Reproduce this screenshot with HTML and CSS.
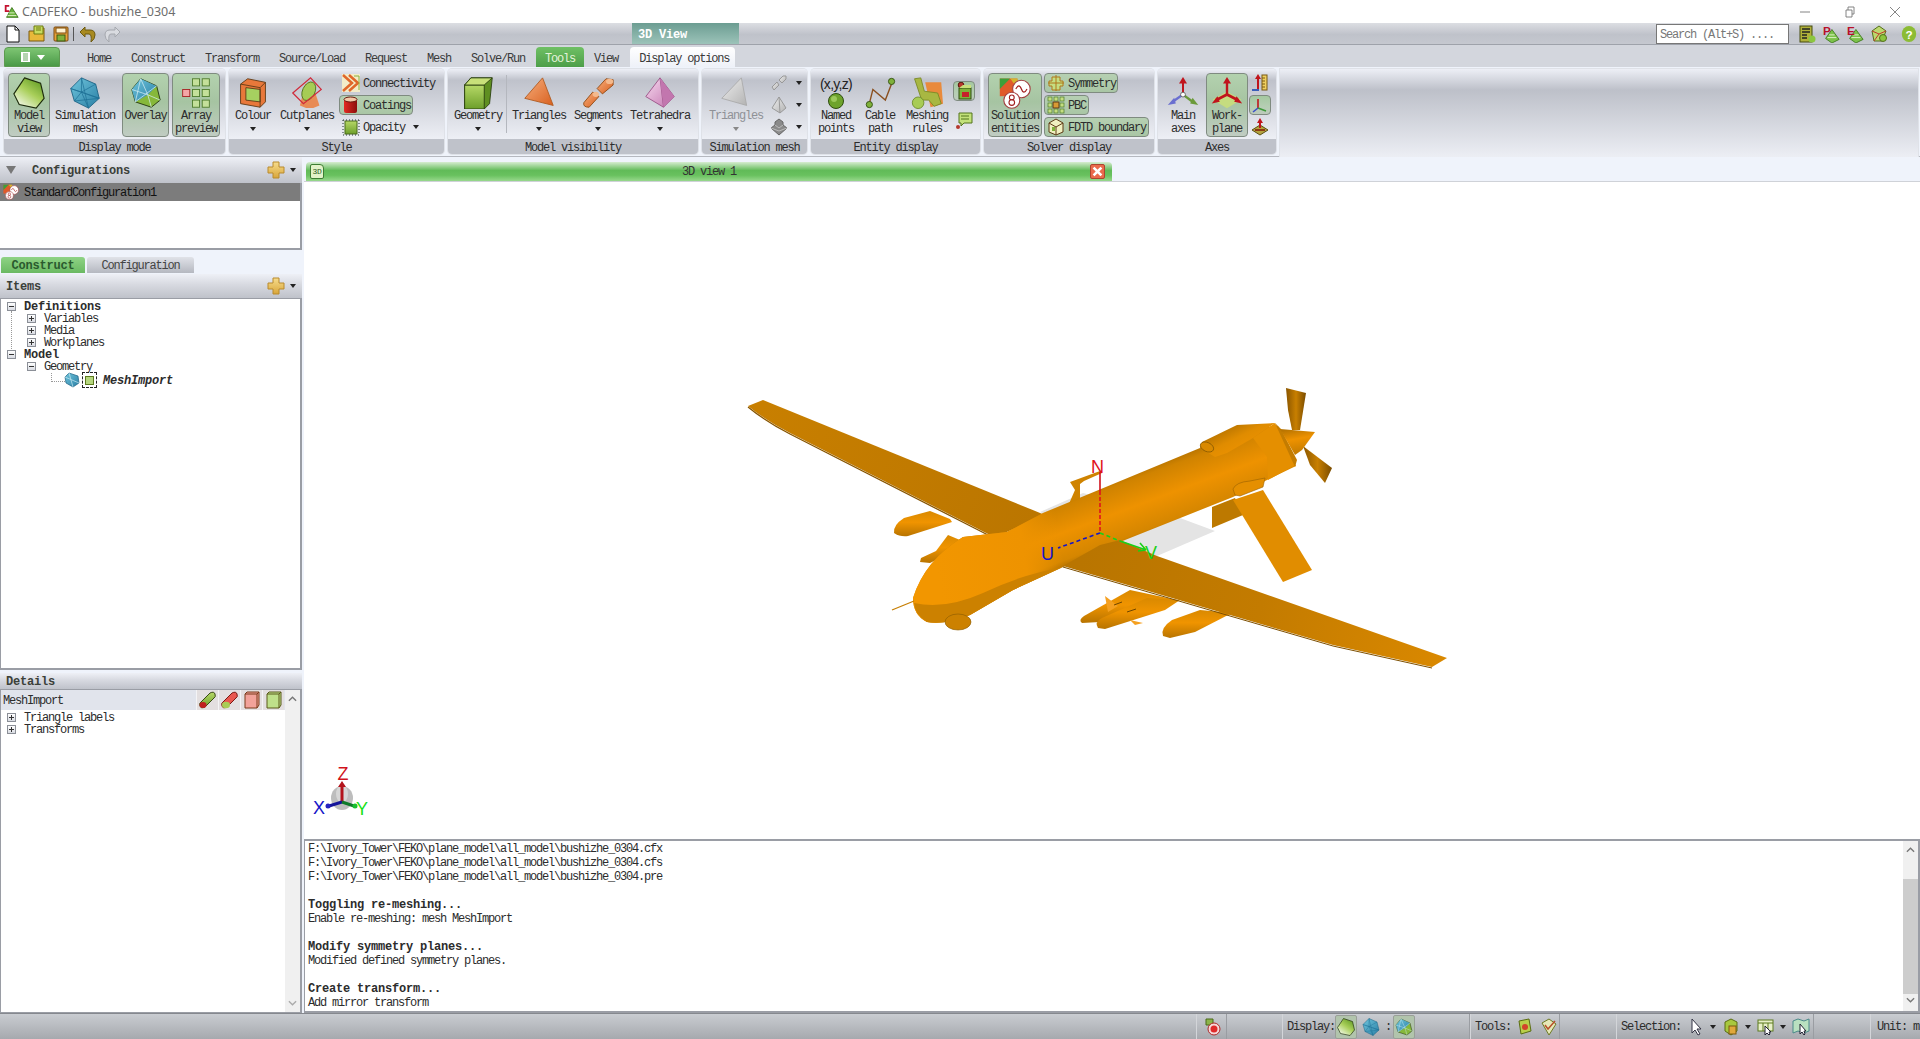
FILE: index.html
```html
<!DOCTYPE html>
<html lang="en">
<head>
<meta charset="utf-8">
<title>CADFEKO - bushizhe_0304</title>
<link rel="stylesheet" href="styles.css">
</head>
<body>
<svg class="defs" aria-hidden="true">
<defs>
<linearGradient id="gr" x1=".8" y1="0" x2=".1" y2="1"><stop offset="0" stop-color="#5f9a22"/><stop offset=".45" stop-color="#a9cf5a"/><stop offset="1" stop-color="#fff"/></linearGradient>
<linearGradient id="gr2" x1="0" y1="0" x2="0" y2="1"><stop offset="0" stop-color="#b6d867"/><stop offset="1" stop-color="#6d9f2a"/></linearGradient>
<linearGradient id="bl" x1="0" y1="0" x2="1" y2="1"><stop offset="0" stop-color="#6fc5dc"/><stop offset="1" stop-color="#2a7fa5"/></linearGradient>
<linearGradient id="or" x1="0" y1="0" x2="1" y2="1"><stop offset="0" stop-color="#f7ae7c"/><stop offset="1" stop-color="#d8601f"/></linearGradient>
<linearGradient id="pk" x1="0" y1="0" x2="1" y2="1"><stop offset="0" stop-color="#f7dcf0"/><stop offset="1" stop-color="#c271ad"/></linearGradient>
<linearGradient id="gy" x1="0" y1="0" x2="1" y2="1"><stop offset="0" stop-color="#eee"/><stop offset="1" stop-color="#b3b3b3"/></linearGradient>
<linearGradient id="rd" x1="0" y1="0" x2="1" y2="0"><stop offset="0" stop-color="#e32b22"/><stop offset="1" stop-color="#8b0f0c"/></linearGradient>
<linearGradient id="gd" x1="0" y1="0" x2="0" y2="1"><stop offset="0" stop-color="#f6dc8c"/><stop offset="1" stop-color="#d9a63a"/></linearGradient>
<linearGradient id="fus" gradientUnits="userSpaceOnUse" x1="1125" y1="470" x2="1151" y2="540"><stop offset="0" stop-color="#a86a00"/><stop offset=".16" stop-color="#d08300"/><stop offset=".5" stop-color="#ee9200"/><stop offset=".85" stop-color="#d58600"/><stop offset="1" stop-color="#a06500"/></linearGradient>
<linearGradient id="nose" gradientUnits="userSpaceOnUse" x1="935" y1="560" x2="1060" y2="540"><stop offset="0" stop-color="#f29600"/><stop offset=".7" stop-color="#ee9300"/><stop offset="1" stop-color="#ee9300" stop-opacity="0"/></linearGradient>
<linearGradient id="hump" gradientUnits="userSpaceOnUse" x1="1225" y1="425" x2="1240" y2="455"><stop offset="0" stop-color="#b37100"/><stop offset=".5" stop-color="#e08c00"/><stop offset="1" stop-color="#ee9200"/></linearGradient>
<linearGradient id="spin" gradientUnits="userSpaceOnUse" x1="1295" y1="428" x2="1300" y2="455"><stop offset="0" stop-color="#b87400"/><stop offset=".4" stop-color="#ee9200"/><stop offset="1" stop-color="#bf7900"/></linearGradient>
<linearGradient id="wing1" gradientUnits="userSpaceOnUse" x1="760" y1="410" x2="1030" y2="530"><stop offset="0" stop-color="#c87f00"/><stop offset="1" stop-color="#bb7600"/></linearGradient>
<linearGradient id="wing2" gradientUnits="userSpaceOnUse" x1="1080" y1="560" x2="1440" y2="660"><stop offset="0" stop-color="#b97500"/><stop offset=".5" stop-color="#c37b00"/><stop offset="1" stop-color="#d98800"/></linearGradient>
<linearGradient id="blade" x1="0" y1="0" x2="1" y2="0"><stop offset="0" stop-color="#8a5600"/><stop offset=".5" stop-color="#c87f00"/><stop offset="1" stop-color="#7a4c00"/></linearGradient>
<linearGradient id="pod" x1="0" y1="0" x2="0" y2="1"><stop offset="0" stop-color="#d98900"/><stop offset=".45" stop-color="#f09400"/><stop offset="1" stop-color="#b87400"/></linearGradient>
</defs>
<symbol id="i-model" viewBox="0 0 36 36"><path d="M13 1 31 7 35 24 26 35 7 31 1 19Z" fill="url(#gr)" stroke="#1d2c0c" stroke-width="1.300"/></symbol>
<symbol id="i-mesh" viewBox="0 0 36 36"><path d="M14 1 30 8 34 24 22 35 6 27 2 13Z" fill="url(#bl)" stroke="#1c6284"/><path d="M14 1 14 17 34 24M2 13 14 17 22 35M14 17 6 27M30 8 14 17M14 1 22 35M2 13 34 24M6 27 34 24" fill="none" stroke="#1d6f95" stroke-width=".8"/></symbol>
<symbol id="i-overlay" viewBox="0 0 36 36"><path d="M12 2 30 10 34 26 24 34 6 28 2 14Z" fill="#86b83a" stroke="#22330f"/><path d="M12 2 30 10 20 20 6 28 2 14Z" fill="url(#bl)"/><path d="M12 2 20 20 24 34M2 14 20 20 34 26M12 2 6 28M30 10 6 28" fill="none" stroke="#d7f0f5" stroke-width=".8"/></symbol>
<symbol id="i-array" viewBox="0 0 36 36"><g fill="#c4e09a" stroke="#4d7a2b"><rect x="14" y="2" width="8" height="8"/><rect x="25" y="2" width="8" height="8"/><rect x="14" y="14" width="8" height="8"/><rect x="25" y="14" width="8" height="8"/><rect x="14" y="26" width="8" height="8"/><rect x="25" y="26" width="8" height="8"/></g><rect x="3" y="14" width="8" height="8" fill="#f4a6a6" stroke="#a32020"/></symbol>
<symbol id="i-colour" viewBox="0 0 36 36"><path d="M4 8 12 2 32 6 32 28 26 34 4 30Z" fill="#e8783a" stroke="#5c3a15"/><path d="M10 12 26 14 26 28 10 26Z" fill="#a6d060" stroke="#5c3a15"/><path d="M4 8 26 12 32 6M26 12V34" fill="none" stroke="#5c3a15"/></symbol>
<symbol id="i-cut" viewBox="0 0 36 36"><path d="M10 32 16 8 24 8 32 32Q21 38 10 32Z" fill="#e88b55"/><ellipse cx="20" cy="16" rx="7" ry="11" transform="rotate(25 20 16)" fill="#a6cc55" stroke="#557722"/><path d="M2 18 22 1 34 14 14 30Z" fill="none" stroke="#d02a3a" stroke-width="1.400"/></symbol>
<symbol id="i-conn" viewBox="0 0 18 18"><rect width="18" height="18" fill="#f3ecc8"/><path d="M1 1 10 9 1 17M7 1 16 9 7 17" fill="none" stroke="#e0672a" stroke-width="2.500"/><path d="M12 2 17 2 17 16" stroke="#8ab040" fill="none"/></symbol>
<symbol id="i-coat" viewBox="0 0 18 18"><rect x="2" y="3" width="13" height="14" rx="2" fill="url(#rd)"/><ellipse cx="8.500" cy="3.500" rx="6.500" ry="2.500" fill="#f3c9a8" stroke="#6d1a10"/></symbol>
<symbol id="i-opac" viewBox="0 0 18 18"><rect x="3" y="3" width="12" height="13" fill="url(#gr2)" stroke="#4b6d1a"/><path d="M1 2H17M1 17H17M1 2V17M17 2V17" stroke="#233" stroke-dasharray="1 2"/></symbol>
<symbol id="i-geo" viewBox="0 0 36 36"><path d="M3 9 10 1 34 1 31 30 25 36 3 36Z" fill="#5f8f21" stroke="#2b4010"/><rect x="3" y="9" width="22" height="27" fill="url(#gr2)" stroke="#2b4010"/><path d="M3 9 10 1 34 1 25 9Z" fill="#c8e07a" stroke="#2b4010"/></symbol>
<symbol id="i-tri" viewBox="0 0 36 36"><path d="M22 1 34 32 2 24Z" fill="url(#or)" stroke="#b05a20"/></symbol>
<symbol id="i-seg" viewBox="0 0 36 36"><g fill="url(#or)" stroke="#8e4a14"><path d="M17 13 27 2 35 3 35 9 23 19Z"/><path d="M2 29 12 17 19 22 8 34Q1 34 2 29Z"/></g><ellipse cx="31" cy="5" rx="4" ry="3" fill="#f4b98c"/><ellipse cx="15.500" cy="19.500" rx="3.500" ry="3" fill="#f4b98c"/></symbol>
<symbol id="i-tet" viewBox="0 0 36 36"><path d="M18 1 34 22 22 34 2 22Z" fill="url(#pk)" stroke="#9a5186"/><path d="M18 1 22 34" stroke="#9a5186"/><path d="M18 1 34 22 22 34Z" fill="#c276ae"/></symbol>
<symbol id="i-gtri" viewBox="0 0 36 36"><path d="M24 1 30 32 2 24Z" fill="url(#gy)" stroke="#aaa"/></symbol>
<symbol id="i-gseg" viewBox="0 0 18 18"><g fill="url(#gy)" stroke="#999"><path d="M9 6 13 2 16 2 16 5 12 9Z"/><path d="M2 13 7 8 9 11 4 16Z"/></g></symbol>
<symbol id="i-gtet" viewBox="0 0 18 18"><path d="M9 1 16 12 10 17 2 12Z" fill="url(#gy)" stroke="#999"/><path d="M9 1 10 17" stroke="#999"/></symbol>
<symbol id="i-gstack" viewBox="0 0 18 18"><path d="M9 1 13 4V7L17 10 9 17 1 10 5 7V4Z" fill="#8a8a8a" stroke="#666"/><path d="M5 7 9 10 13 7M1 10 9 13 17 10" fill="none" stroke="#bbb"/></symbol>
<symbol id="i-named" viewBox="0 0 36 18"><circle cx="18" cy="9" r="7.500" fill="#6ea32c" stroke="#2f4d10"/><circle cx="16" cy="7" r="3" fill="#9cc95a"/></symbol>
<symbol id="i-cable" viewBox="0 0 36 36"><path d="M6 30 10 14 24 26 32 5" fill="none" stroke="#8a5020" stroke-width="1.600"/><circle cx="31" cy="5" r="3.500" fill="#7fb13a" stroke="#2f4d10"/><circle cx="6" cy="31" r="3.500" fill="#7fb13a" stroke="#2f4d10"/></symbol>
<symbol id="i-rules" viewBox="0 0 36 36"><path d="M16 6 34 6 36 30 22 34Z" fill="#e98a3c"/><path d="M4 2 11 1 15 16 30 18 34 30 26 33 20 26 12 26Z" fill="#a8b742" stroke="#7a8a25"/><circle cx="8" cy="29" r="6.500" fill="#a8cc55" stroke="#6f8d2a"/></symbol>
<symbol id="i-entity" viewBox="0 0 18 18"><rect x="4" y="6" width="12" height="11" fill="#7fb13a" stroke="#2f4d10"/><rect x="7" y="10" width="7" height="5" fill="#c71f2a"/><circle cx="6" cy="3" r="2.800" fill="#b5382e" stroke="#5a160f"/><path d="M4 6 8 3 16 3 16 6" fill="#c8e07a"/></symbol>
<symbol id="i-note" viewBox="0 0 18 18"><path d="M4 1H17V11H9L6 14V11H4Z" fill="#c3e27a" stroke="#53751c"/><path d="M6 4H14M6 7H14" stroke="#53751c"/><circle cx="3" cy="15" r="2" fill="#b5382e"/></symbol>
<symbol id="i-sol" viewBox="0 0 40 40"><rect x="1" y="2" width="22" height="22" fill="#e05a2a"/><path d="M1 2H14L1 15Z" fill="#3d9f3a"/><path d="M14 2H23V14Z" fill="#d4b52c"/><circle cx="28" cy="15" r="11" fill="#fff" stroke="#a34040" stroke-width="1.400"/><path d="M21 15Q25 7 28 15T35 15" fill="none" stroke="#a32020" stroke-width="1.500"/><circle cx="16" cy="29" r="10" fill="#fff" stroke="#a34040" stroke-width="1.400"/><circle cx="16" cy="25.500" r="3" fill="none" stroke="#a32020" stroke-width="1.400"/><circle cx="16" cy="32" r="3.500" fill="none" stroke="#a32020" stroke-width="1.400"/></symbol>
<symbol id="i-sym" viewBox="0 0 18 18"><path d="M5 3H13V7H16V12H13V16H5V12H2V7H5Z" fill="#c4de82" stroke="#b0781a"/><path d="M9 1V17M1 9H17" stroke="#b0781a"/></symbol>
<symbol id="i-pbc" viewBox="0 0 18 18"><g fill="#c4de82" stroke="#4d7a2b" stroke-width=".7"><rect x="1" y="1" width="4" height="4"/><rect x="7" y="1" width="4" height="4"/><rect x="13" y="1" width="4" height="4"/><rect x="1" y="7" width="4" height="4"/><rect x="13" y="7" width="4" height="4"/><rect x="1" y="13" width="4" height="4"/><rect x="7" y="13" width="4" height="4"/><rect x="13" y="13" width="4" height="4"/></g><rect x="6" y="6" width="6" height="6" fill="#d99a34" stroke="#5c3a15"/></symbol>
<symbol id="i-fdtd" viewBox="0 0 18 18"><path d="M2 5 9 1 16 5V14L9 17 2 14Z" fill="#f0f0c0" stroke="#5c3a15"/><path d="M2 5 9 9 16 5M9 9V17" fill="none" stroke="#5c3a15"/><rect x="5" y="9" width="3" height="4" fill="#7fb13a"/></symbol>
<symbol id="i-axes" viewBox="0 0 40 40"><path d="M20 21V6" stroke="#c0141c" stroke-width="2.500"/><path d="M20 0 25 8H15Z" fill="#c0141c"/><path d="M20 22 7 31" stroke="#6a6fd0" stroke-width="3"/><path d="M1 35 9 26 11 33Z" fill="#6a6fd0"/><path d="M20 22 32 31" stroke="#6b9a3a" stroke-width="3"/><path d="M39 35 29 33 32 26Z" fill="#6b9a3a"/><circle cx="20" cy="22" r="3" fill="#fff" stroke="#555"/></symbol>
<symbol id="i-wp" viewBox="0 0 40 40"><path d="M20 39 2 28 20 18 38 28Z" fill="#c5dc7f"/><path d="M20 22V6" stroke="#c0141c" stroke-width="3"/><path d="M20 0 25 8H15Z" fill="#c0141c"/><path d="M20 22 6 29M20 22 34 29" stroke="#c0141c" stroke-width="3.500"/><path d="M1 33 8 24 11 31Z M39 33 32 24 29 31Z" fill="#c0141c"/></symbol>
<symbol id="i-ax1" viewBox="0 0 18 18"><path d="M7 16V4" stroke="#c0141c" stroke-width="2"/><path d="M7 0 10 5H4Z" fill="#c0141c"/><path d="M1 16H8" stroke="#3a5fb8" stroke-width="2"/><rect x="11" y="1" width="5" height="15" fill="#f0d060" stroke="#7a5a10"/><path d="M11 4H14M11 7H14M11 10H14M11 13H14" stroke="#7a5a10"/></symbol>
<symbol id="i-ax2" viewBox="0 0 18 18"><path d="M7 12V3" stroke="#c0141c" stroke-width="1.600"/><path d="M7 12 2 16" stroke="#3a4fc8" stroke-width="1.600"/><path d="M7 12 15 15" stroke="#3f9a3a" stroke-width="1.600"/></symbol>
<symbol id="i-ax3" viewBox="0 0 18 18"><path d="M9 17 1 12 9 7 17 12Z" fill="#b5a33e" stroke="#5a4f14"/><path d="M9 10V3" stroke="#c0141c" stroke-width="2"/><path d="M9 0 12 5H6Z" fill="#c0141c"/><path d="M4 12H14" stroke="#8a3c14" stroke-width="2"/></symbol>
<symbol id="i-plus" viewBox="0 0 18 18"><path d="M6 1H12V6H17V12H12V17H6V12H1V6H6Z" fill="url(#gd)" stroke="#b98a2c"/></symbol>
<symbol id="i-cad" viewBox="0 0 18 18"><path d="M10 4 17 15 4 15Z" fill="#6cb33f" stroke="#3f7a1e"/><path d="M5 13H15M7 10H13" stroke="#e7f5d0"/><path d="M7 1H2V9H7V7H4V3H7Z" fill="#c41230"/></symbol>
<symbol id="i-tree-mesh" viewBox="0 0 16 16"><path d="M5 1 14 4 15 11 9 15 2 11 1 5Z" fill="url(#bl)" stroke="#1c6284" stroke-width=".7"/><path d="M5 1 9 15M1 5 15 11" stroke="#c8eaf2" stroke-width=".7"/></symbol>
<symbol id="i-cyl-g" viewBox="0 0 18 18"><path d="M2 11 11 2Q15 0 16 3 17 6 15 7L6 16Q2 18 1 15 0 12 2 11Z" fill="url(#gr2)" stroke="#3a4a15"/><ellipse cx="4" cy="14" rx="3.500" ry="3" fill="#c01f20"/></symbol>
<symbol id="i-cyl-r" viewBox="0 0 18 18"><path d="M2 11 11 2Q15 0 16 3 17 6 15 7L6 16Q2 18 1 15 0 12 2 11Z" fill="#e9574f" stroke="#7a1812"/><ellipse cx="5" cy="14" rx="4" ry="3.300" fill="#a8cc55"/></symbol>
<symbol id="i-box-r" viewBox="0 0 18 18"><path d="M2 3 4 1H16V14L14 17H2Z" fill="#f2a29a" stroke="#7a3a1a"/><path d="M2 3H14V17M14 3 16 1" fill="none" stroke="#7a3a1a"/></symbol>
<symbol id="i-box-g" viewBox="0 0 18 18"><path d="M2 3 4 1H16V14L14 17H2Z" fill="#bfe08a" stroke="#5a5a1a"/><path d="M2 3H14V17M14 3 16 1" fill="none" stroke="#5a5a1a"/></symbol>
<symbol id="i-cursor" viewBox="0 0 18 18"><path d="M5 1V15L8 12 11 17 13 16 10 11H14Z" fill="#fff" stroke="#334"/></symbol>
<symbol id="i-table" viewBox="0 0 18 18"><rect x="1" y="2" width="15" height="11" fill="#e8f0c8" stroke="#5c7a1e"/><path d="M1 5H16M6 5V13M11 5V13" stroke="#5c7a1e"/><path d="M8 8V17L10 15 12 17 13 16 12 14H14Z" fill="#fff" stroke="#223"/></symbol>
<symbol id="i-doc" viewBox="0 0 18 18"><path d="M3 1H11L15 5V17H3Z" fill="#fff" stroke="#111"/><path d="M11 1V5H15" fill="none" stroke="#111"/></symbol>
<symbol id="i-open" viewBox="0 0 18 18"><path d="M1 6H8V3H16V16H1Z" fill="#e8b83a" stroke="#7a5a10"/><path d="M6 1H15V9H6Z" fill="#c8dc60" stroke="#6d7a10"/><path d="M8 3H13M8 5H13" stroke="#6d7a10"/></symbol>
<symbol id="i-save" viewBox="0 0 18 18"><rect x="2" y="2" width="14" height="14" rx="1" fill="#e9a23a" stroke="#7a4a10"/><rect x="4" y="3" width="10" height="5" fill="#fff2cf" stroke="#7a4a10"/><rect x="5" y="10" width="8" height="6" fill="#7fb13a" stroke="#3f5a10"/></symbol>
<symbol id="i-undo" viewBox="0 0 18 18"><path d="M1 7 6 2V5H11Q16 5 16 10 16 14 12 17 13 9 10 9H6V12Z" fill="#a88a20" stroke="#6d5a10"/></symbol>
<symbol id="i-redo" viewBox="0 0 18 18"><path d="M17 7 12 2V5H7Q2 5 2 10 2 14 6 17 5 9 8 9H12V12Z" fill="#d9dbe0" stroke="#a5a8ae"/></symbol>
<symbol id="i-abacus" viewBox="0 0 18 18"><rect x="2" y="1" width="12" height="16" fill="#b0b03a" stroke="#444a10"/><path d="M4 4H12M4 7H12M4 10H9M4 13H9" stroke="#222" stroke-width="1.300"/><circle cx="14" cy="14" r="3.500" fill="#8cc63f"/></symbol>
<symbol id="i-tree2" viewBox="0 0 20 20"><path d="M11 5 19 16 11 20 4 15Z" fill="#7cc24a" stroke="#3f7a1e"/><path d="M6 14H16M8 11H14" stroke="#e7f5d0"/></symbol>
<symbol id="i-tool" viewBox="0 0 18 18"><path d="M9 1 16 6 12 16 4 16 2 6Z" fill="#bcd86e" stroke="#54701a"/><path d="M2 6 9 9 16 6M9 9 4 16" stroke="#c0392b" fill="none"/><circle cx="13" cy="13" r="3.500" fill="#8cc63f" stroke="#54701a"/></symbol>
<symbol id="i-rec" viewBox="0 0 18 18"><path d="M3 1H10V7H3Z" fill="#8cb44a" stroke="#4a6a18"/><circle cx="11" cy="11" r="6" fill="#f4d8d8" stroke="#b02a2a"/><circle cx="11" cy="11" r="3.500" fill="#e02a2a"/></symbol>
<symbol id="i-t1" viewBox="0 0 18 18"><path d="M3 3 13 1 15 13 5 16Z" fill="#b9cf4a" stroke="#5a6d12"/><circle cx="9" cy="9" r="3" fill="#d2452a"/></symbol>
<symbol id="i-t2" viewBox="0 0 18 18"><path d="M2 5 9 1 16 6 9 17Z" fill="#e6e8b8" stroke="#6d7a22"/><path d="M5 7 8 11 15 3" fill="none" stroke="#b8502a" stroke-width="1.500"/></symbol>
<symbol id="i-selbox" viewBox="0 0 18 18"><path d="M3 4 9 1 15 4V13L9 17 3 13Z" fill="#a8c83e" stroke="#5a6d12"/><rect x="7" y="8" width="7" height="8" fill="#e0a83a" stroke="#7a5a10"/></symbol>
<symbol id="i-selmap" viewBox="0 0 18 18"><path d="M1 3 6 1 12 3 17 1V13L12 15 6 13 1 15Z" fill="#b9e0c0" stroke="#4a8a8a"/><path d="M8 6V16L10 14 12 17 13 16 12 13H14Z" fill="#fff" stroke="#223"/></symbol>
</svg>

<header class="titlebar">
  <svg class="ic16 tb-logo"><use href="#i-cad"/></svg>
  <span class="tb-title">CADFEKO - bushizhe_0304</span>
  <div class="winctl">
    <svg class="wc" viewBox="0 0 12 12"><path d="M1 6H11"/></svg>
    <svg class="wc" viewBox="0 0 12 12"><path d="M2 4H8V11H2ZM4 4V1H10V8H8"/></svg>
    <svg class="wc" viewBox="0 0 12 12"><path d="M1 1 11 11M11 1 1 11"/></svg>
  </div>
</header>

<div class="quick">
  <div class="q-icons">
    <svg class="ic18"><use href="#i-doc"/></svg>
    <svg class="ic18"><use href="#i-open"/></svg>
    <svg class="ic18"><use href="#i-save"/></svg>
    <span class="q-sep"></span>
    <svg class="ic18"><use href="#i-undo"/></svg>
    <svg class="ic18"><use href="#i-redo"/></svg>
  </div>
  <div class="ctx-head">3D View</div>
  <div class="search">Search (Alt+S) ....</div>
  <div class="q-right">
    <svg class="ic18"><use href="#i-abacus"/></svg>
    <svg class="ic18" viewBox="0 0 20 20"><use href="#i-tree2"/><text x="1" y="11" class="ico-t">P</text></svg>
    <svg class="ic18" viewBox="0 0 20 20"><use href="#i-tree2"/><text x="1" y="11" class="ico-t">E</text></svg>
    <svg class="ic18"><use href="#i-tool"/></svg>
    <svg class="ic18 help" viewBox="0 0 20 20"><ellipse cx="10" cy="10" rx="8" ry="9" fill="#8cbc35"/><text x="10" y="15" class="ico-q">?</text></svg>
  </div>
</div>

<nav class="tabs">
  <div class="appbtn"><svg class="app-doc" viewBox="0 0 12 12"><rect x="2" y="1" width="9" height="10" fill="#fff"/><path d="M4 3H9M4 5H9M4 7H9M4 9H9" stroke="#6aa860"/></svg><i class="arr arr-w"></i></div>
  <span class="tab t-home">Home</span>
  <span class="tab">Construct</span>
  <span class="tab">Transform</span>
  <span class="tab">Source/Load</span>
  <span class="tab">Request</span>
  <span class="tab">Mesh</span>
  <span class="tab">Solve/Run</span>
  <span class="tab tab-tools">Tools</span>
  <span class="tab t-view">View</span>
  <span class="tab tab-active">Display options</span>
</nav>

<section class="ribbon">
  <div class="group g1">
    <div class="g-body p4">
      <div class="rb w42 on"><svg class="ic36"><use href="#i-model"/></svg><span>Model</span><span>view</span></div>
      <div class="rb w66 ml2"><svg class="ic36"><use href="#i-mesh"/></svg><span>Simulation</span><span>mesh</span></div>
      <div class="rb w47 ml4 on"><svg class="ic36"><use href="#i-overlay"/></svg><span>Overlay</span></div>
      <div class="rb w48 ml3 on"><svg class="ic36"><use href="#i-array"/></svg><span>Array</span><span>preview</span></div>
    </div>
    <div class="g-label">Display mode</div>
  </div>

  <div class="group g2">
    <div class="g-body p1">
      <div class="rb w46"><svg class="ic36"><use href="#i-colour"/></svg><span>Colour</span><i class="arr"></i></div>
      <div class="rb w58 ml2"><svg class="ic36"><use href="#i-cut"/></svg><span>Cutplanes</span><i class="arr"></i></div>
      <div class="col ml3">
        <div class="si"><svg class="ic18"><use href="#i-conn"/></svg><span>Connectivity</span></div>
        <div class="si on"><svg class="ic18"><use href="#i-coat"/></svg><span>Coatings</span></div>
        <div class="si"><svg class="ic18"><use href="#i-opac"/></svg><span>Opacity</span><i class="arr arr-s"></i></div>
      </div>
    </div>
    <div class="g-label">Style</div>
  </div>

  <div class="group g3">
    <div class="g-body p3">
      <div class="rb w54"><svg class="ic36"><use href="#i-geo"/></svg><span>Geometry</span><i class="arr"></i></div>
      <span class="r-sep"></span>
      <div class="rb w60 ml2"><svg class="ic36"><use href="#i-tri"/></svg><span>Triangles</span><i class="arr"></i></div>
      <div class="rb w56 ml1"><svg class="ic36"><use href="#i-seg"/></svg><span>Segments</span><i class="arr"></i></div>
      <div class="rb w66 ml1"><svg class="ic36"><use href="#i-tet"/></svg><span>Tetrahedra</span><i class="arr"></i></div>
    </div>
    <div class="g-label">Model visibility</div>
  </div>

  <div class="group g4">
    <div class="g-body p4 dim">
      <div class="rb w60"><svg class="ic36"><use href="#i-gtri"/></svg><span>Triangles</span><i class="arr arr-g"></i></div>
      <div class="col ml4">
        <div class="si2"><svg class="ic18"><use href="#i-gseg"/></svg><i class="arr"></i></div>
        <div class="si2"><svg class="ic18"><use href="#i-gtet"/></svg><i class="arr"></i></div>
        <div class="si2"><svg class="ic18"><use href="#i-gstack"/></svg><i class="arr"></i></div>
      </div>
    </div>
    <div class="g-label">Simulation mesh</div>
  </div>

  <div class="group g5">
    <div class="g-body p4">
      <div class="rb w42"><div class="xyz"><span class="xyz-t">(x,y,z)</span><svg class="ic-named"><use href="#i-named"/></svg></div><span>Named</span><span>points</span></div>
      <div class="rb w42 ml2"><svg class="ic36"><use href="#i-cable"/></svg><span>Cable</span><span>path</span></div>
      <div class="rb w46 ml3"><svg class="ic36"><use href="#i-rules"/></svg><span>Meshing</span><span>rules</span></div>
      <div class="col2 ml3">
        <div class="sq on"><svg class="ic18"><use href="#i-entity"/></svg></div>
        <div class="sq"><svg class="ic18"><use href="#i-note"/></svg></div>
      </div>
    </div>
    <div class="g-label">Entity display</div>
  </div>

  <div class="group g6">
    <div class="g-body p4">
      <div class="rb w54 on"><svg class="ic36"><use href="#i-sol"/></svg><span>Solution</span><span>entities</span></div>
      <div class="col ml2">
        <div class="si on w74"><svg class="ic18"><use href="#i-sym"/></svg><span>Symmetry</span></div>
        <div class="si on w45"><svg class="ic18"><use href="#i-pbc"/></svg><span>PBC</span></div>
        <div class="si on w105"><svg class="ic18"><use href="#i-fdtd"/></svg><span>FDTD boundary</span></div>
      </div>
    </div>
    <div class="g-label">Solver display</div>
  </div>

  <div class="group g7">
    <div class="g-body p5">
      <div class="rb w40"><svg class="ic36"><use href="#i-axes"/></svg><span>Main</span><span>axes</span></div>
      <div class="rb w42 ml3 on"><svg class="ic36"><use href="#i-wp"/></svg><span>Work-</span><span>plane</span></div>
      <div class="col ml1">
        <div class="sq"><svg class="ic18"><use href="#i-ax1"/></svg></div>
        <div class="sq on"><svg class="ic18"><use href="#i-ax2"/></svg></div>
        <div class="sq"><svg class="ic18"><use href="#i-ax3"/></svg></div>
      </div>
    </div>
    <div class="g-label">Axes</div>
  </div>

  <div class="group g8"></div>
</section>

<main class="workspace">
  <aside class="left">
    <div class="phead phead-cfg">
      <i class="tri-down"></i><b class="ph-t">Configurations</b>
      <svg class="ic18 ph-plus"><use href="#i-plus"/></svg><i class="arr"></i>
    </div>
    <div class="cfg-list">
      <div class="cfg-sel"><svg class="ic16"><use href="#i-sol"/></svg><span>StandardConfiguration1</span></div>
    </div>
    <div class="ltabs">
      <b class="ltab ltab-on">Construct</b>
      <span class="ltab">Configuration</span>
    </div>
    <div class="phead phead-items">
      <b class="ph-t2">Items</b>
      <svg class="ic18 ph-plus"><use href="#i-plus"/></svg><i class="arr"></i>
    </div>
    <div class="tree">
      <i class="vline"></i>
      <div class="tr l0"><i class="ex minus"></i><b>Definitions</b></div>
      <div class="tr l1"><i class="ex plus"></i><span>Variables</span></div>
      <div class="tr l1"><i class="ex plus"></i><span>Media</span></div>
      <div class="tr l1"><i class="ex plus"></i><span>Workplanes</span></div>
      <div class="tr l0"><i class="ex minus"></i><b>Model</b></div>
      <div class="tr l1"><i class="ex minus"></i><span>Geometry</span></div>
      <div class="tr-mesh">
        <i class="stub"></i>
        <svg class="ic16"><use href="#i-tree-mesh"/></svg>
        <span class="dotbox"><i></i></span>
        <b class="mi">MeshImport</b>
      </div>
    </div>
    <div class="phead phead-det"><b class="ph-t2">Details</b></div>
    <div class="details">
      <div class="det-main">
        <div class="det-head">
          <span class="det-name">MeshImport</span>
          <span class="det-btn"><svg class="ic18"><use href="#i-cyl-g"/></svg></span>
          <span class="det-btn"><svg class="ic18"><use href="#i-cyl-r"/></svg></span>
          <span class="det-btn"><svg class="ic18"><use href="#i-box-r"/></svg></span>
          <span class="det-btn"><svg class="ic18"><use href="#i-box-g"/></svg></span>
        </div>
        <div class="tr l0 first"><i class="ex plus"></i><span>Triangle labels</span></div>
        <div class="tr l0"><i class="ex plus"></i><span>Transforms</span></div>
      </div>
      <div class="sb"><svg class="chev" viewBox="0 0 10 6"><path d="M1 5 5 1 9 5"/></svg><span class="sb-fill"></span><svg class="chev" viewBox="0 0 10 6"><path d="M1 1 5 5 9 1"/></svg></div>
    </div>
  </aside>

  <section class="right">
    <div class="vtabbar">
      <div class="vtab">
        <span class="vt-ic">3D</span>
        <span class="vt-text">3D view 1</span>
        <span class="vt-x"><svg viewBox="0 0 10 10"><path d="M2 2 8 8M8 2 2 8"/></svg></span>
      </div>
    </div>
    <div class="viewport">
      <svg class="scene" viewBox="304 182 1616 657" preserveAspectRatio="none">
        <polygon points="1040,512 1083,493 1180,518 1215,531 1157,556 1090,540" fill="#e4e4e4"/>
        <!-- far pods -->
        <path d="M950,519 930,511 904,518Q893,525 894,533 900,537 908,536L952,522Z" fill="url(#pod)"/>
        <path d="M948,535 936,551 921,558 920,562 930,563 950,553 960,540Z" fill="url(#pod)"/>
        <!-- far wing -->
        <path d="M748,406 763,400 1045,515 1000,535 988,534 790,433Q765,420 748,406Z" fill="url(#wing1)"/>
        <path d="M748,407Q765,421 790,434L988,535" fill="none" stroke="#875500" stroke-width="1.300"/>
        <!-- antenna + tail -->
        <path d="M1070,482 1100,471 1102,473 1084,481 1080,484 1080,503 1068,506 1075,490Z" fill="#cf8300"/>
        <polygon points="1212,507 1212,528 1243,515 1235,498" fill="#bd7900"/>
        <polygon points="1233,500 1263,490 1312,570 1283,582" fill="#e18d00"/>
        <!-- propeller -->
        <polygon points="1286,388 1306,393 1300,430 1292,430 1288,410" fill="url(#blade)"/>
        <polygon points="1303,446 1332,468 1325,483 1310,465" fill="url(#blade)"/>
        <!-- body -->
        <path d="M913,598Q925,560 963,537L1007,532 1043,513 1200,448 1237,430 1278,426 1296,466 1267,480 1233,497 1120,542 1063,567 1013,590 970,615Q945,625 927,622 913,615 913,598Z" fill="url(#fus)"/>
        <path d="M913,598Q925,560 963,537L1007,532 1043,513 1062,505 1075,560 1063,567 1013,590 970,615Q945,625 927,622 913,615 913,598Z" fill="url(#nose)"/>
        <path d="M914,603Q945,610 983,593 1020,575 1063,567L1013,590 970,615Q945,625 927,622 915,615 914,603Z" fill="#cc8100"/>
        <path d="M1200,448 1202,442 1237,425 1275,423 1253,438 1227,453 1215,457Z" fill="url(#hump)"/>
        <polygon points="1253,438 1275,423 1295,465 1268,480 1267,457" fill="#e58f00"/>
        <polygon points="1275,423 1281,429 1297,460 1295,467" fill="#c47c00"/>
        <polygon points="1280,429 1315,432 1302,450 1295,455" fill="url(#spin)"/>
        <ellipse cx="1207" cy="447" rx="7" ry="4.500" transform="rotate(25 1207 447)" fill="#d98900" stroke="#8a5a00" stroke-width=".8"/>
        <path d="M1233,489Q1236,482 1250,481L1265,478 1263,487 1240,496 1235,495Z" fill="#e58f00" stroke="#9a6200" stroke-width=".6"/>
        <!-- near stores -->
        <path d="M1130,590 1177,600 1170,606 1100,622 1082,623Q1078,620 1084,616Z" fill="url(#pod)"/>
        <path d="M1147,598 1180,600 1165,610 1105,629 1098,628Q1094,622 1102,618Z" fill="url(#pod)"/>
        <path d="M1105,596 1118,606 1108,612Z M1130,620 1143,623 1135,625Z" fill="#f5a020"/>
        <path d="M1114,605 1122,602M1127,612 1136,609" stroke="#6d4500" stroke-width="1"/>
        <path d="M1200,610 1232,613 1195,632 1170,638 1163,636Q1160,628 1172,620Z" fill="url(#pod)"/>
        <!-- pitot + nose gear -->
        <path d="M892,610 914,601" stroke="#c67d00" stroke-width="1.200"/>
        <ellipse cx="958" cy="622" rx="13" ry="8" fill="#cc8100" stroke="#8a5a00" stroke-width=".6"/>
        <!-- near wing -->
        <polygon points="1063,566 1100,545 1120,540 1157,556 1447,658 1432,667 1333,645 1230,615" fill="url(#wing2)"/>
        <polyline points="1063,567 1230,616 1333,646 1432,668" fill="none" stroke="#7d4f00" stroke-width="1"/>
        <!-- workplane axes -->
        <path d="M1100,472V491" stroke="#d0121c" stroke-width="1.600"/>
        <path d="M1100,491V533" stroke="#e0121c" stroke-width="1.600" stroke-dasharray="4 2"/>
        <path d="M1100,533 1058,548" stroke="#1515c8" stroke-width="1.600" stroke-dasharray="4 3"/>
        <path d="M1100,533 1120,541" stroke="#18d018" stroke-width="1.600" stroke-dasharray="4 3"/>
        <path d="M1120,541 1146,550M1146,550 1140,543M1146,550 1138,551" stroke="#18d018" stroke-width="1.600" fill="none"/>
        <text x="1097.500" y="473" class="ax" fill="#e0121c">N</text>
        <text x="1047.500" y="560" class="ax" fill="#1515c8">U</text>
        <text x="1151" y="559" class="ax" fill="#18d018">V</text>
        <!-- triad -->
        <ellipse cx="342" cy="798" rx="11" ry="12" fill="#bdbdbd"/>
        <ellipse cx="342" cy="794" rx="6" ry="9" fill="#d6d6d6"/>
        <path d="M342 802V785" stroke="#b3141c" stroke-width="3"/>
        <path d="M342 781 346 787H338Z" fill="#b3141c"/>
        <path d="M342 802 329 806" stroke="#14149a" stroke-width="3"/>
        <circle cx="328" cy="806" r="2.500" fill="#2424c0"/>
        <path d="M342 802 354 806" stroke="#0e7a2a" stroke-width="3"/>
        <circle cx="355" cy="806" r="2.500" fill="#18c030"/>
        <text x="343" y="780" class="ax" fill="#d0121c">Z</text>
        <text x="319" y="814" class="ax" fill="#1515c8">X</text>
        <text x="362" y="815" class="ax" fill="#18e018">Y</text>
      </svg>
    </div>
    <div class="console">
      <div class="con-text">
        <div>F:\Ivory_Tower\FEKO\plane_model\all_model\bushizhe_0304.cfx</div>
        <div>F:\Ivory_Tower\FEKO\plane_model\all_model\bushizhe_0304.cfs</div>
        <div>F:\Ivory_Tower\FEKO\plane_model\all_model\bushizhe_0304.pre</div>
        <div class="blank"></div>
        <b>Toggling re-meshing...</b>
        <div>Enable re-meshing: mesh MeshImport</div>
        <div class="blank"></div>
        <b>Modify symmetry planes...</b>
        <div>Modified defined symmetry planes.</div>
        <div class="blank"></div>
        <b>Create transform...</b>
        <div>Add mirror transform</div>
      </div>
      <div class="sb sb-con"><svg class="chev" viewBox="0 0 10 6"><path d="M1 5 5 1 9 5"/></svg><span class="sb-top"></span><span class="sb-thumb"></span><svg class="chev" viewBox="0 0 10 6"><path d="M1 1 5 5 9 1"/></svg></div>
    </div>
  </section>
</main>

<footer class="status">
  <div class="st c-rec"><svg class="ic18"><use href="#i-rec"/></svg></div>
  <div class="st c-disp">
    <span>Display:</span>
    <span class="st-on"><svg class="ic18"><use href="#i-model"/></svg></span>
    <svg class="ic18 d-mesh"><use href="#i-mesh"/></svg>
    <span class="colon">:</span>
    <span class="st-on"><svg class="ic18"><use href="#i-overlay"/></svg></span>
  </div>
  <div class="st c-tools">
    <span>Tools:</span>
    <svg class="ic18"><use href="#i-t1"/></svg>
    <svg class="ic18"><use href="#i-t2"/></svg>
  </div>
  <div class="st c-sel">
    <span>Selection:</span>
    <svg class="ic18"><use href="#i-cursor"/></svg><i class="arr"></i>
    <svg class="ic18"><use href="#i-selbox"/></svg><i class="arr"></i>
    <svg class="ic18"><use href="#i-table"/></svg><i class="arr"></i>
    <svg class="ic18"><use href="#i-selmap"/></svg>
  </div>
  <div class="st c-unit"><span>Unit: m</span></div>
</footer>
</body>
</html>
```
FILE: styles.css
```css
* { box-sizing: border-box; }
html, body { margin: 0; padding: 0; }
body {
  width: 1920px; height: 1039px; overflow: hidden;
  display: flex; flex-direction: column;
  font: 12px/13px "Liberation Mono", monospace;
  letter-spacing: -1.2px;
  color: #2c2c2c;
  background: #eff3fb;
}
b { font-weight: 700; letter-spacing: -.2px; }
i { font-style: normal; display: block; }
svg { display: block; flex: none; }
.defs { position: absolute; width: 0; height: 0; }
.ico-t { font: 700 13px "Liberation Sans", sans-serif; fill: #b8102a; letter-spacing: 0; }
.ico-q { font: 700 13px "Liberation Sans", sans-serif; fill: #fff; letter-spacing: 0; text-anchor: middle; }
.ic16 { width: 16px; height: 16px; }
.ic18 { width: 18px; height: 18px; }
.ic36 { width: 32px; height: 32px; }

.arr { width: 0; height: 0; border: 3px solid transparent; border-top: 4px solid #222; border-bottom: 0; }
.arr-w { border-top-color: #fff; border-left-width: 4px; border-right-width: 4px; border-top-width: 5px; }
.arr-g { border-top-color: #888; }

/* title bar */
.titlebar { height: 23px; background: #fff; display: flex; align-items: center; padding-left: 3px; flex: none; }
.tb-title { font: 12.5px "Noto Sans", sans-serif; letter-spacing: 0; color: #6e6e6e; margin-left: 3px; }
.winctl { margin-left: auto; display: flex; gap: 33px; padding-right: 19px; }
.wc { width: 12px; height: 12px; fill: none; stroke: #777; stroke-width: .9; }

/* quick bar */
.quick { height: 22px; flex: none; display: flex; background: linear-gradient(#dcdee3, #bfc2ca 55%, #c5c8cf); border-bottom: 1px solid #9ea2aa; }
.q-icons { width: 632px; display: flex; align-items: center; gap: 6px; padding-left: 4px; }
.q-sep { width: 1px; height: 14px; background: #555; margin: 0 -1px 0 -3px; }
.ctx-head { width: 107px; background: linear-gradient(#6c9d92, #9cc3b9); color: #fff; font-weight: 700; letter-spacing: -.2px; line-height: 22px; padding: 1px 0 0 6px; }
.search { width: 133px; height: 20px; margin: 1px 0 0 917px; background: #fff; border: 1px solid #777; color: #777; line-height: 18px; padding: 1px 0 0 3px; }
.q-right { display: flex; align-items: center; gap: 6px; padding-left: 9px; }
.help { margin-left: 6px; }

/* tabs */
.tabs { height: 22px; flex: none; display: flex; align-items: flex-end; background: #d3d6dd; padding-left: 4px; color: #3a3a3a; }
.appbtn { width: 56px; height: 20px; margin-right: 27px; border-radius: 4px 4px 0 0; border: 1px solid #5d9a50; background: linear-gradient(#7ec573, #4a9a47); display: flex; align-items: center; justify-content: center; gap: 6px; }
.app-doc { width: 12px; height: 12px; }
.tab { height: 20px; line-height: 20px; padding: 2px 10px 0; }
.t-home { margin-left: -10px; }
.tab-tools { margin: 0 0 0 1px; width: 48px; text-align: center; padding: 2px 0 0; background: linear-gradient(#6fc064, #4d9e49); color: #e4f3da; border-radius: 4px 4px 0 0; }
.t-view { margin-left: 0; padding-right: 12px; }
.tab-active { width: 105px; padding: 2px 0 0 9px; background: linear-gradient(#fff, #eef1f8); border-radius: 4px 4px 0 0; }

/* ribbon */
.ribbon { height: 90px; flex: none; display: flex; gap: 4px; padding: 2px 2px 3px 4px; background: #eff3fb; border-bottom: 1px solid #b5b8bf; }
.group { height: 85px; display: flex; flex-direction: column; border-radius: 4px; overflow: hidden; box-shadow: 0 0 0 1px #dfe2e8; }
.g1 { width: 221px; } .g2 { width: 215px; } .g3 { width: 250px; } .g4 { width: 105px; }
.g5 { width: 169px; } .g6 { width: 170px; } .g7 { width: 118px; }
.g8 { flex: 1; height: 88px; background: linear-gradient(#edeff6, #bdc0c9 24%, #eceef4); border-radius: 0; }
.g-body { height: 70px; display: flex; padding-top: 4px; background: linear-gradient(#edeff6, #bfc2cb 16%, #edeff5); }
.g-label { height: 15px; line-height: 15px; padding-top: 2px; text-align: center; background: #bfc2ca; color: #2c2c2c; }
.p1 { padding-left: 1px; } .p3 { padding-left: 3px; } .p4 { padding-left: 4px; } .p5 { padding-left: 5px; }
.ml1 { margin-left: 1px; } .ml2 { margin-left: 2px; } .ml3 { margin-left: 3px; } .ml4 { margin-left: 4px; }
.w40 { width: 40px; } .w42 { width: 42px; } .w46 { width: 46px; } .w47 { width: 47px; } .w48 { width: 48px; }
.w54 { width: 54px; } .w56 { width: 56px; } .w58 { width: 58px; } .w60 { width: 60px; } .w66 { width: 66px; }
.si.w74 { width: 74px; } .si.w45 { width: 45px; } .si.w105 { width: 105px; }

.rb { height: 64px; display: flex; flex-direction: column; align-items: center; border: 1px solid transparent; border-radius: 4px; }
.rb > svg { margin: 3px 0 1px; }
.rb > span { white-space: nowrap; line-height: 13px; }
.rb > .arr { margin-top: 4px; }
.on { background: linear-gradient(#a4c8a0, #b6ceb4 60%, #bccabb); border-color: #7f8b80 !important; }
.rb.on { background: linear-gradient(#b3d2ae, #a6c4a2 45%, #c0ccc2); }
.g-body.dim .rb > span { color: #8f9196; }
.r-sep { width: 1px; height: 58px; margin-top: 2px; background: #b4b7be; margin-left: 1px; }

.col { display: flex; flex-direction: column; gap: 2px; }
.col2 { display: flex; flex-direction: column; gap: 10px; padding-top: 8px; }
.si { height: 20px; display: flex; align-items: center; gap: 3px; padding: 0 2px; border: 1px solid transparent; border-radius: 4px; white-space: nowrap; }
.si > span { padding-top: 2px; }
.si.on { background: linear-gradient(#b6d0b2, #a9c6a5); }
.si .arr-s { margin-left: 5px; }
.col > .si:nth-child(2):not(.w45) { width: 74px; }
.si2 { height: 20px; display: flex; align-items: center; gap: 8px; }
.sq { width: 22px; height: 20px; display: flex; align-items: center; justify-content: center; border: 1px solid transparent; border-radius: 4px; }
.xyz { height: 36px; display: flex; flex-direction: column; align-items: center; }
.xyz-t { font: 14px/16px "Liberation Sans", sans-serif; letter-spacing: -.7px; color: #222; margin-top: 2px; }
.ic-named { width: 36px; height: 18px; }

/* workspace */
.workspace { flex: 1; display: flex; min-height: 0; }
.left { width: 304px; flex: none; display: flex; flex-direction: column; background: #eff3fb; border-right: 2px solid #eff3fb; }
.phead { display: flex; align-items: center; background: linear-gradient(#eef0f6, #d7d9e0 45%, #bfc2ca); flex: none; }
.phead-cfg { height: 26px; }
.phead-items { height: 24px; }
.phead-det { height: 16px; margin-top: 3px; padding-left: 6px; }
.ph-plus { margin-left: auto; margin-right: 5px; }
.phead .arr { margin-right: 6px; }
.tri-down { width: 0; height: 0; border: 5px solid transparent; border-top: 8px solid #777; border-bottom: 0; margin: 0 16px 0 6px; }
.ph-t { color: #3b4039; margin-top: 3px; }
.ph-t2 { padding-left: 6px; color: #3b4039; margin-top: 2px; }
.phead-det .ph-t2 { padding-left: 0; }
.cfg-list { height: 67px; flex: none; background: #fff; border: solid #9a9da5; border-width: 0 2px 2px 0; }
.cfg-sel { height: 18px; background: #7c7c7c; display: flex; align-items: center; gap: 5px; padding-left: 3px; color: #111; }
.cfg-sel > span { padding-top: 2px; }
.ltabs { height: 24px; flex: none; display: flex; align-items: flex-end; gap: 2px; padding-left: 1px; padding-bottom: 1px; }
.ltab { height: 16px; line-height: 16px; padding-top: 1px; text-align: center; border-radius: 3px 3px 0 0; width: 107px; background: linear-gradient(#e0e2e8, #b5b8c0); color: #444; }
.ltab-on { width: 84px; background: linear-gradient(#8fd385, #6ab962); color: #2a5a2e; }
.tree { height: 372px; flex: none; position: relative; background: #fff; border: solid #9a9da5; border-width: 1px 2px 2px 1px; padding-top: 1px; }
.vline { position: absolute; left: 10px; top: 12px; height: 38px; border-left: 1px dotted #999; }
.tr { height: 12px; line-height: 12px; display: flex; align-items: center; white-space: nowrap; }
.tr > span, .tr > b { padding-top: 2px; }
.l0 { padding-left: 6px; }
.l1 { padding-left: 26px; }
.ex { width: 9px; height: 9px; border: 1px solid #8b8f97; background: linear-gradient(#fff, #d8dbe2); margin-right: 3px; position: relative; flex: none; }
.ex::before { content: ""; position: absolute; left: 1px; right: 1px; top: 3px; height: 1px; background: #333; }
.plus::after { content: ""; position: absolute; top: 1px; bottom: 1px; left: 3px; width: 1px; background: #333; }
.l0 > b, .l0 > span { margin-left: 5px; }
.l1 > span { margin-left: 5px; }
.tr-mesh { height: 16px; display: flex; align-items: center; padding-left: 50px; }
.stub { width: 18px; height: 9px; margin: -6px -5px 0 0; border-left: 1px dotted #999; border-bottom: 1px dotted #999; }
.dotbox { width: 15px; height: 16px; border: 1px dashed #222; margin-left: 2px; display: flex; align-items: center; justify-content: center; }
.dotbox i { width: 9px; height: 9px; background: #b5d67e; border: 1px solid #5c7a1e; }
.mi { font-style: italic; margin: 2px 0 0 6px; }
.details { flex: 1; display: flex; background: #fff; border: solid #9a9da5; border-width: 1px 2px 1px 1px; min-height: 0; }
.det-main { width: 284px; flex: none; }
.det-head { height: 20px; display: flex; align-items: center; background: #e1e4ec; margin-bottom: 1px; padding-right: 1px; }
.det-name { flex: 1; padding: 2px 0 0 2px; }
.det-btn { width: 22px; height: 20px; display: flex; align-items: center; justify-content: center; background: #e3dfe0; border-left: 1px solid #f4f4f6; }
.first { margin-top: 1px; }
.sb { width: 15px; flex: none; background: #f0f0f0; display: flex; flex-direction: column; align-items: center; padding: 6px 0; }
.chev { width: 9px; height: 6px; fill: none; stroke: #777; stroke-width: 1.5; }
.sb-fill { flex: 1; }
.details .sb .chev:last-child { stroke: #aaa; }

/* right */
.right { flex: 1; min-width: 0; display: flex; flex-direction: column; }
.vtabbar { height: 25px; flex: none; padding: 5px 0 0 2px; background: #eff3fb; border-bottom: 1px solid #cfd2d8; }
.vtab { width: 806px; height: 19px; display: flex; align-items: center; padding-left: 4px; border-radius: 4px 4px 0 0; background: linear-gradient(#d5ecd0, #61bb58 45%, #69c15f 70%, #98d88c); }
.vt-ic { width: 14px; height: 15px; font-size: 8px; letter-spacing: -.4px; line-height: 13px; border: 1px solid #3d7d33; background: #e2f2c8; color: #2b5a22; text-align: center; border-radius: 2px 4px 2px 2px; }
.vt-text { margin-left: 358px; padding-top: 2px; color: #333; }
.vt-x { width: 15px; height: 15px; margin-left: auto; margin-right: 7px; background: #ea6a4c; border: 1px solid #ad4530; border-radius: 2px; }
.vt-x svg { width: 13px; height: 13px; stroke: #fff; stroke-width: 2; fill: none; }
.viewport { height: 657px; flex: none; background: #fff; }
.scene { width: 1616px; height: 657px; }
.ax { font: 18px "Liberation Sans", sans-serif; letter-spacing: 0; text-anchor: middle; }
.console { flex: 1; display: flex; background: #fff; border: solid #9a9da5; border-width: 2px 2px 2px 1px; min-height: 0; }
.con-text { flex: 1; padding: 1px 0 0 3px; line-height: 14px; white-space: nowrap; overflow: hidden; }
.con-text > b { display: block; }
.con-text > div { height: 14px; }
.sb-con { padding: 6px 0 3px; }
.sb-top { height: 26px; }
.sb-thumb { width: 15px; height: 115px; background: #cdcdcd; margin: 0 0 3px; flex: none; }

/* status */
.status { height: 26px; flex: none; display: flex; background: linear-gradient(#c9ccd1, #a6a9ae); border-top: 1px solid #85888e; }
.st { height: 25px; display: flex; align-items: center; border-left: 1px solid #d3d5d9; border-right: 1px solid #9a9da2; }
.st > span:not(.st-on) { padding-top: 2px; }
.c-rec { width: 31px; margin-left: 1196px; padding-left: 6px; }
.c-disp { width: 188px; margin-left: 55px; padding-left: 4px; }
.st-on { width: 22px; height: 24px; display: flex; align-items: center; justify-content: center; background: #b1c4ac; border: 1px solid #999f98; border-radius: 2px; }
.d-mesh { margin-left: 5px; }
.colon { margin: 0 2px 0 5px; }
.c-tools { width: 90px; padding-left: 4px; gap: 6px; }
.c-tools > span { margin-right: -1px; }
.c-sel { width: 198px; margin-left: 56px; padding-left: 4px; }
.c-sel > span { margin-right: 6px; }
.c-sel .arr { margin: 0 6px 0 5px; }
.c-unit { margin-left: 56px; flex: 1; padding-left: 6px; border-right: 0; white-space: nowrap; overflow: hidden; }
```
